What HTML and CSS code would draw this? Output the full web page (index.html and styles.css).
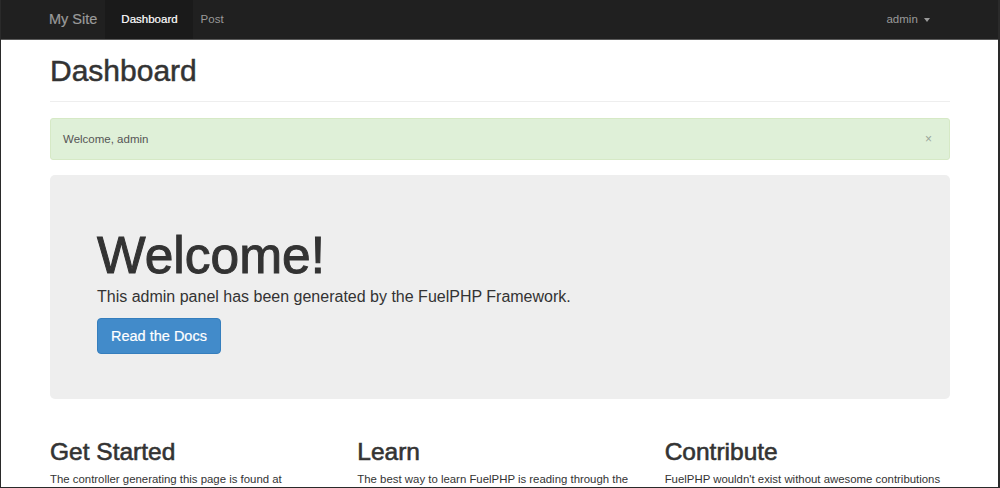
FILE: index.html
```html
<!DOCTYPE html>
<html lang="en">
<head>
<meta charset="utf-8">
<title>Dashboard</title>
<link rel="stylesheet" href="styles.css">
</head>
<body>
<div class="frame">
  <nav class="navbar">
    <div class="nav-inner">
      <a class="brand" href="#">My Site</a>
      <ul class="nav">
        <li class="active"><a href="#">Dashboard</a></li>
        <li><a href="#">Post</a></li>
      </ul>
      <div class="nav-right"><a href="#">admin <span class="caret"></span></a></div>
    </div>
  </nav>
  <main class="container">
    <div class="page-header"><h1>Dashboard</h1></div>
    <div class="alert"><span>Welcome, admin</span><span class="close">×</span></div>
    <section class="jumbotron">
      <h1>Welcome!</h1>
      <p class="lead">This admin panel has been generated by the FuelPHP Framework.</p>
      <a class="btn" href="#">Read the Docs</a>
    </section>
    <div class="cols">
      <div class="col">
        <h2>Get Started</h2>
        <p>The controller generating this page is found at</p>
      </div>
      <div class="col">
        <h2>Learn</h2>
        <p>The best way to learn FuelPHP is reading through the</p>
      </div>
      <div class="col">
        <h2>Contribute</h2>
        <p>FuelPHP wouldn't exist without awesome contributions</p>
      </div>
    </div>
  </main>
</div>
</body>
</html>
```

FILE: styles.css
```css
* { box-sizing: border-box; }
html, body { margin: 0; padding: 0; }
body {
  font-family: "Liberation Sans", Arial, sans-serif;
  color: #333;
  background: #fff;
  overflow: hidden;
}
a { text-decoration: none; }
.frame {
  width: 1000px;
  height: 488px;
  overflow: hidden;
  border-left: 1px solid #2a2a2a;
  border-right: 2px solid #2a2a2a;
  border-bottom: 1px solid #2a2a2a;
}
.navbar {
  height: 40px;
  background: #202020;
  border-bottom: 1px solid #5a5a5a;
}
.nav-inner {
  margin-left: 48px;
  width: 902px;
  height: 39px;
  display: flex;
  align-items: stretch;
}
.brand {
  color: #9a9a9a;
  font-size: 14.5px;
  line-height: 39px;
  padding-right: 8px;
  -webkit-text-stroke: 0.2px #9a9a9a;
}
.nav {
  list-style: none;
  margin: 0;
  padding: 0;
  display: flex;
}
.nav li a {
  display: block;
  padding: 0 8px;
  line-height: 39px;
  font-size: 11.5px;
  color: #999;
}
.nav li.active a {
  background: #1a1a1a;
  color: #fff;
  padding: 0 15px 0 16px;
  -webkit-text-stroke: 0.2px #fff;
}
.nav-right {
  margin-left: auto;
  padding-right: 21px;
}
.nav-right a {
  color: #9a9a9a;
  font-size: 11.5px;
  line-height: 39px;
}
.caret {
  display: inline-block;
  width: 0;
  height: 0;
  margin-left: 3px;
  vertical-align: middle;
  border-top: 4px solid #9a9a9a;
  border-left: 3.5px solid transparent;
  border-right: 3.5px solid transparent;
}
.container {
  margin-left: 49px;
  width: 900px;
}
.page-header {
  margin-top: 14px;
  padding-bottom: 14px;
  border-bottom: 1px solid #eee;
}
.page-header h1 {
  margin: 0;
  font-size: 30px;
  line-height: 33px;
  font-weight: normal;
  color: #333;
  -webkit-text-stroke: 0.5px #333;
}
.alert {
  margin-top: 16px;
  height: 42px;
  padding: 0 12px;
  background: #dff0d8;
  border: 1px solid #d6e9c6;
  border-radius: 3px;
  display: flex;
  align-items: center;
  justify-content: space-between;
  font-size: 11.5px;
  color: #555;
}
.close {
  color: #9aa59a;
  font-size: 12px;
  margin-right: 5px;
}
.jumbotron {
  margin-top: 15px;
  height: 224px;
  padding: 52px 47px 0;
  background: #eee;
  border-radius: 5px;
}
.jumbotron h1 {
  margin: 0 0 3px;
  font-size: 51.5px;
  line-height: 56px;
  font-weight: normal;
  color: #333;
  -webkit-text-stroke: 1px #333;
}
.lead {
  margin: 0 0 10px;
  font-size: 16px;
  line-height: 22px;
  color: #333;
}
.btn {
  display: inline-block;
  padding: 7px 13px;
  font-size: 14.5px;
  line-height: 20px;
  color: #fff;
  background: #428bca;
  border: 1px solid #357ebd;
  border-radius: 4px;
  -webkit-text-stroke: 0.2px #fff;
}
.cols {
  margin-top: 39px;
  display: grid;
  grid-template-columns: repeat(3, 1fr);
  column-gap: 22px;
}
.col h2 {
  margin: 0 0 6px;
  font-size: 24.5px;
  line-height: 27px;
  font-weight: normal;
  color: #333;
  -webkit-text-stroke: 0.6px #333;
}
.col p {
  margin: 0;
  font-size: 11.4px;
  line-height: 17px;
  color: #333;
  white-space: nowrap;
}
```
